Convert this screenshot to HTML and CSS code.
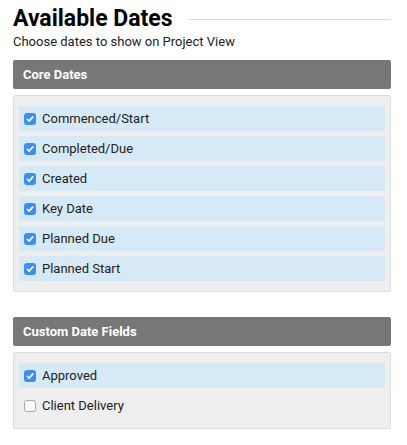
FILE: index.html
```html
<!DOCTYPE html>
<html>
<head>
<meta charset="utf-8">
<link rel="stylesheet" href="styles.css">
</head>
<body>
<div class="page">
  <div class="title-row">
    <h1 class="title">Available Dates</h1>
    <div class="rule"></div>
  </div>
  <p class="subtitle">Choose dates to show on Project View</p>

  <div class="section-head">Core Dates</div>
  <div class="panel">
    <label class="row checked"><span class="cb on"><svg viewBox="0 0 12 12" width="12" height="12"><path d="M3.3 6.3 L5.1 8.1 L8.8 3.9" fill="none" stroke="#fff" stroke-width="1.6" stroke-linecap="round" stroke-linejoin="round"/></svg></span><span class="label">Commenced/Start</span></label>
    <label class="row checked"><span class="cb on"><svg viewBox="0 0 12 12" width="12" height="12"><path d="M3.3 6.3 L5.1 8.1 L8.8 3.9" fill="none" stroke="#fff" stroke-width="1.6" stroke-linecap="round" stroke-linejoin="round"/></svg></span><span class="label">Completed/Due</span></label>
    <label class="row checked"><span class="cb on"><svg viewBox="0 0 12 12" width="12" height="12"><path d="M3.3 6.3 L5.1 8.1 L8.8 3.9" fill="none" stroke="#fff" stroke-width="1.6" stroke-linecap="round" stroke-linejoin="round"/></svg></span><span class="label">Created</span></label>
    <label class="row checked"><span class="cb on"><svg viewBox="0 0 12 12" width="12" height="12"><path d="M3.3 6.3 L5.1 8.1 L8.8 3.9" fill="none" stroke="#fff" stroke-width="1.6" stroke-linecap="round" stroke-linejoin="round"/></svg></span><span class="label">Key Date</span></label>
    <label class="row checked"><span class="cb on"><svg viewBox="0 0 12 12" width="12" height="12"><path d="M3.3 6.3 L5.1 8.1 L8.8 3.9" fill="none" stroke="#fff" stroke-width="1.6" stroke-linecap="round" stroke-linejoin="round"/></svg></span><span class="label">Planned Due</span></label>
    <label class="row checked"><span class="cb on"><svg viewBox="0 0 12 12" width="12" height="12"><path d="M3.3 6.3 L5.1 8.1 L8.8 3.9" fill="none" stroke="#fff" stroke-width="1.6" stroke-linecap="round" stroke-linejoin="round"/></svg></span><span class="label">Planned Start</span></label>
  </div>

  <div class="section-head second">Custom Date Fields</div>
  <div class="panel">
    <label class="row checked"><span class="cb on"><svg viewBox="0 0 12 12" width="12" height="12"><path d="M3.3 6.3 L5.1 8.1 L8.8 3.9" fill="none" stroke="#fff" stroke-width="1.6" stroke-linecap="round" stroke-linejoin="round"/></svg></span><span class="label">Approved</span></label>
    <label class="row"><span class="cb off"></span><span class="label">Client Delivery</span></label>
  </div>
</div>
</body>
</html>
```

FILE: styles.css
```css
html, body {
  margin: 0;
  padding: 0;
  background: #fff;
}

.page {
  width: 378px;
  margin-left: 13px;
  font-family: Roboto, "Liberation Sans", sans-serif;
}

.title-row {
  display: flex;
  align-items: center;
  gap: 16px;
  margin-top: 5px;
}

.title {
  margin: 0;
  font-size: 23px;
  line-height: 28px;
  font-weight: 700;
  color: #000;
}

.rule {
  flex: 1;
  border-top: 1px solid #dcdcdc;
}

.subtitle {
  margin: 1px 0 0;
  font-size: 13px;
  line-height: 16px;
  color: #222;
}

.section-head {
  margin-top: 10px;
  height: 29px;
  line-height: 29px;
  padding-left: 10px;
  background: #777777;
  color: #fff;
  font-size: 13px;
  font-weight: 700;
  border-radius: 2px;
}

.section-head.second {
  margin-top: 25px;
}

.panel {
  margin-top: 6px;
  background: #eeeeee;
  border: 1px solid #dddddd;
  border-radius: 2px;
  padding: 10px 5px;
  display: flex;
  flex-direction: column;
  gap: 5px;
}

.row {
  height: 25px;
  display: flex;
  align-items: center;
  gap: 6px;
  padding-left: 5px;
  font-size: 13px;
  color: #222;
}

.row.checked {
  background: #d5e9f7;
}

.cb {
  width: 12px;
  height: 12px;
  border-radius: 3px;
  box-sizing: border-box;
  display: flex;
  flex: none;
}

.cb.on {
  background: #3b8ef6;
}

.cb.off {
  background: #fff;
  border: 1px solid #a6a6a6;
}
```
